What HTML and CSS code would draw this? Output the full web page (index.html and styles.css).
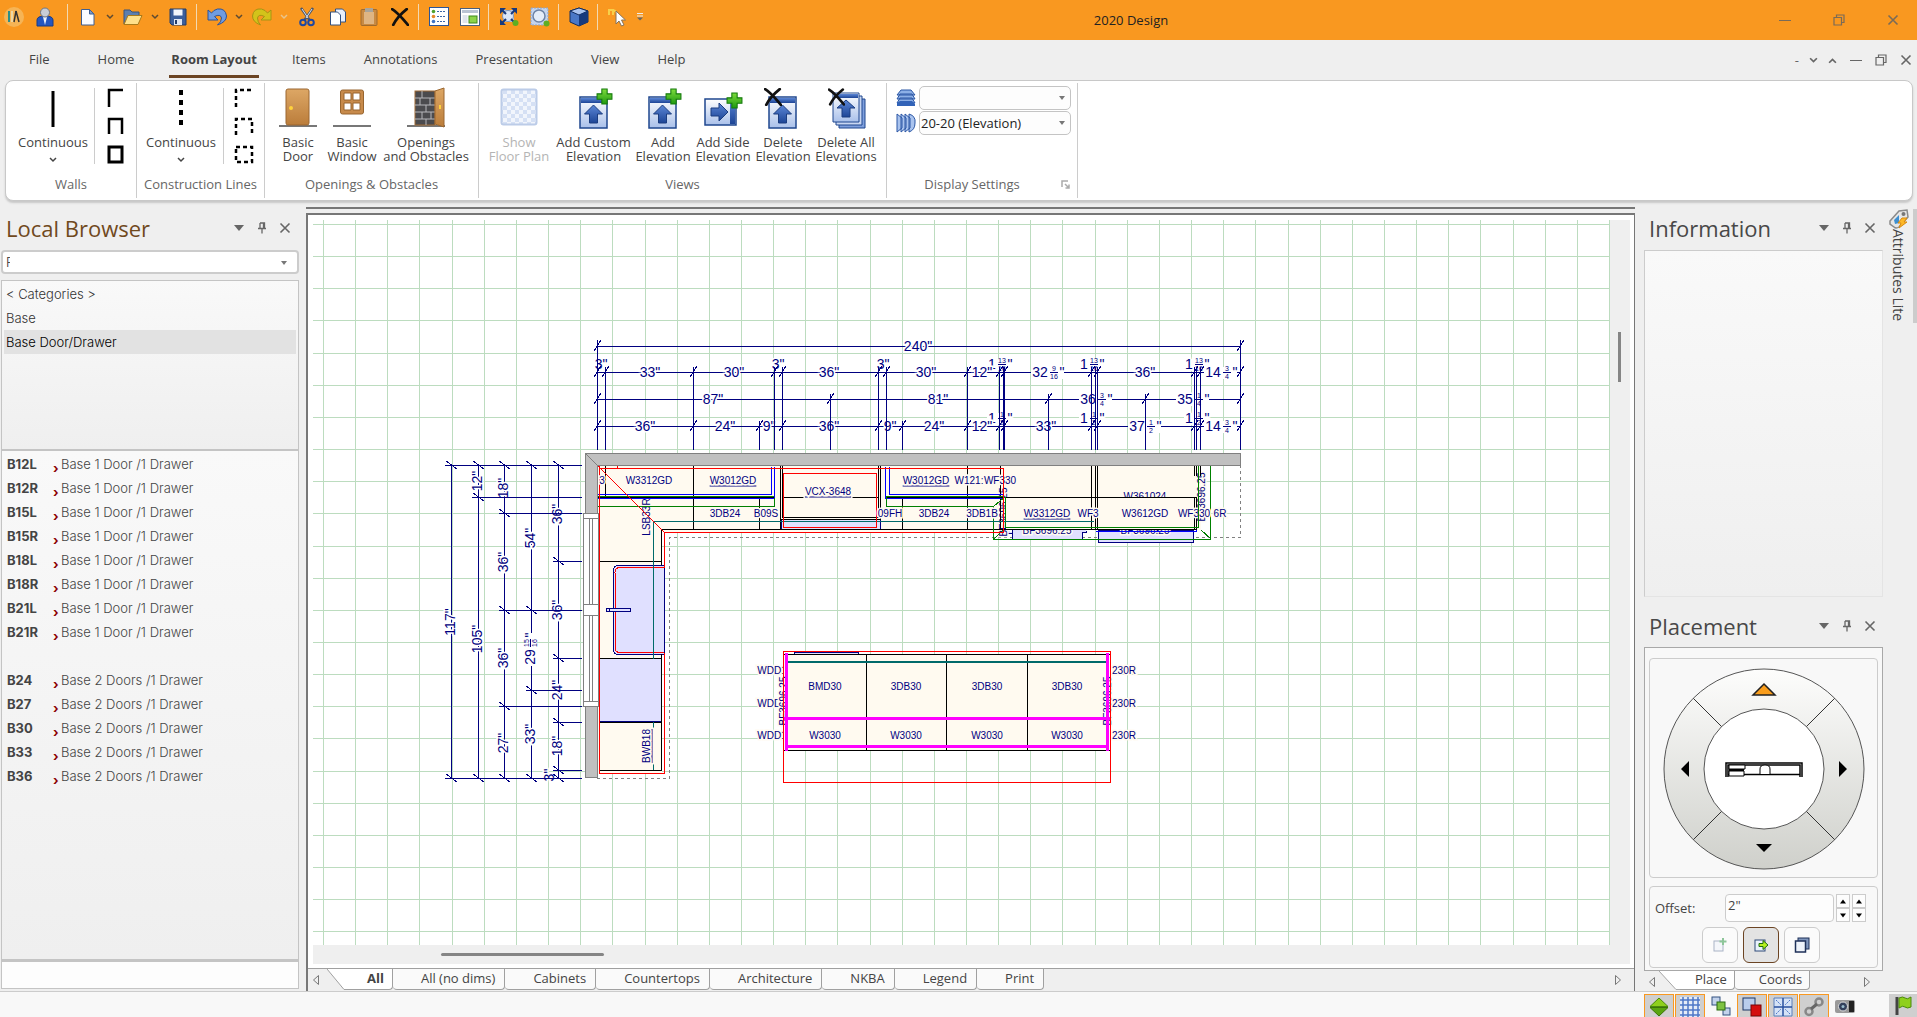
FILE: index.html
```html
<!DOCTYPE html>
<html lang="en">
<head>
  <meta charset="UTF-8" />
  <meta name="viewport" content="width=device-width, initial-scale=1.0"/>
  <title>2020 Design</title>
  <link rel="stylesheet" href="styles.css">
</head>
<body>

  <!-- shared icons -->
  <svg class="defs" width="0" height="0" aria-hidden="true">
    <defs>
      <linearGradient id="gBlue" x1="0" y1="0" x2="0" y2="1"><stop offset="0" stop-color="#5b86d6"/><stop offset="1" stop-color="#1d4596"/></linearGradient>
      <linearGradient id="gPale" x1="0" y1="0" x2="0" y2="1"><stop offset="0" stop-color="#ffffff"/><stop offset="1" stop-color="#a9c0ea"/></linearGradient>
      <linearGradient id="gWood" x1="0" y1="0" x2="0" y2="1"><stop offset="0" stop-color="#dda765"/><stop offset="1" stop-color="#bb7d3b"/></linearGradient>
      <linearGradient id="gGreen" x1="0" y1="0" x2="0" y2="1"><stop offset="0" stop-color="#7ddb3c"/><stop offset="1" stop-color="#1f9a10"/></linearGradient>
      <linearGradient id="gRing" x1="0" y1="0" x2="0" y2="1"><stop offset="0" stop-color="#fdfdfc"/><stop offset="1" stop-color="#cfd0cb"/></linearGradient>
      <pattern id="checks" width="8" height="8" patternUnits="userSpaceOnUse"><rect width="8" height="8" fill="#f1f5fc"/><path d="M0 0h4v4h-4zM4 4h4v4h-4z" fill="#d5e0f4"/></pattern>

      <symbol id="chev" viewBox="0 0 8 6"><path d="M1 1l3 3 3-3" fill="none" stroke="currentColor" stroke-width="1.500"/></symbol>
      <symbol id="pin" viewBox="0 0 10 12"><path d="M3 1h4.500v5.500M3 1v5.500M1 6.500h8M5 6.500v5M6.500 1v5.500" fill="none" stroke="currentColor" stroke-width="1.300"/></symbol>
      <symbol id="close" viewBox="0 0 12 12"><path d="M1.500 1.500l9 9M10.500 1.500l-9 9" fill="none" stroke="currentColor" stroke-width="1.600"/></symbol>
      <symbol id="tri" viewBox="0 0 12 8"><path d="M1 1h10l-5 6z" fill="currentColor"/></symbol>
      <symbol id="restore" viewBox="0 0 12 12"><path d="M1 3.500h7.500v7.500h-7.500zM3.500 3v-2h7.500v7.500h-2" fill="none" stroke="currentColor" stroke-width="1.200"/></symbol>
      <symbol id="min" viewBox="0 0 12 12"><path d="M0 6.500h12" stroke="currentColor"/></symbol>
      <symbol id="left" viewBox="0 0 8 12"><path d="M6.500 1.500v9l-5-4.500z" fill="none" stroke="#777"/></symbol>
      <symbol id="right" viewBox="0 0 8 12"><path d="M1.500 1.500v9l5-4.500z" fill="none" stroke="#777"/></symbol>
      <symbol id="slant" viewBox="0 0 21 21"><path d="M0 0l17 20.500h4V0z" fill="#fff"/><path d="M0 0l17 20.500h4" fill="none" stroke="#a0a0a0"/></symbol>
      <symbol id="plus" viewBox="0 0 16 16"><path d="M5.500 1h5v4.500h4.500v5h-4.500v4.500h-5v-4.500h-4.500v-5h4.500z" fill="url(#gGreen)" stroke="#157a0c"/></symbol>
      <symbol id="elev" viewBox="0 0 40 44"><rect x="6" y="11" width="27" height="31" fill="url(#gPale)" stroke="#1f478f" stroke-width="1.500"/><rect x="7" y="12" width="25" height="5" fill="url(#gBlue)"/><path d="M19.500 19l9 9h-5v9h-8v-9h-5z" fill="url(#gBlue)" stroke="#1b3d80"/></symbol>
      <symbol id="bigx" viewBox="0 0 16 16"><path d="M1 1c5 3 9 8 14 14M14 1c-5 4-9 8-12 14" fill="none" stroke="#111" stroke-width="2.400" stroke-linecap="round"/></symbol>
    </defs>
  </svg>

  <header class="titlebar">
    <div class="quick">
      <button class="q" aria-label="2020"><svg width="22" height="22" viewBox="0 0 22 22"><circle cx="11" cy="11" r="10" fill="#f6b455"/><path d="M6 5v11" stroke="#2c8f8a" stroke-width="2"/><path d="M9 5v11" stroke="#e9e3c0" stroke-width="1.500"/><path d="M13 5l-2 11M13 5l3 11" stroke="#333" stroke-width="1.500" fill="none"/></svg></button>
      <button class="q wide" aria-label="Client"><svg width="18" height="20" viewBox="0 0 18 20"><path d="M1 19v-6q0-4 8-4t8 4v6z" fill="#2456c0" stroke="#163a86"/><path d="M7 10l2 8 2-8z" fill="#eef3fc"/><circle cx="9" cy="5.500" r="4.500" fill="#c9cdd6" stroke="#6d7685"/></svg></button>
      <i></i>
      <button class="q" aria-label="New"><svg width="16" height="18" viewBox="0 0 16 18"><path d="M1.500 1.500h8l4.500 4.500v11h-12.500z" fill="#fbfcff" stroke="#3f5f92"/><path d="M9.500 1.500v4.500h4.500z" fill="#7d9ac8" stroke="#3f5f92"/></svg></button>
      <button class="dd" aria-label="New menu"><svg width="8" height="6"><use href="#chev"/></svg></button>
      <button class="q" aria-label="Open"><svg width="20" height="18" viewBox="0 0 20 18"><path d="M1 16v-14h6l2 2h7v4" fill="#5d7fae" stroke="#39557e"/><path d="M1 16.500l4-9h14l-4 9z" fill="#ffe08a" stroke="#a87a1b"/></svg></button>
      <button class="dd" aria-label="Open menu"><svg width="8" height="6"><use href="#chev"/></svg></button>
      <button class="q" aria-label="Save"><svg width="18" height="18" viewBox="0 0 18 18"><path d="M1 1h16v16h-14l-2-2z" fill="#3c5f9b" stroke="#233c69"/><rect x="4.500" y="1.500" width="9" height="6" fill="#f3f6fb"/><rect x="5" y="11" width="8" height="6" fill="#dfe6f2"/><rect x="6" y="12" width="2" height="4" fill="#233c69"/></svg></button>
      <i></i>
      <button class="q" aria-label="Undo"><svg width="20" height="18" viewBox="0 0 20 18"><path d="M1 2v10h10l-3.500-3.500q6-3 7 1.500 0 4-4 7 9-3 9-9-1-8-9-7-4 1-6 4z" fill="#6f9ce0" stroke="#2b529a"/></svg></button>
      <button class="dd" aria-label="Undo menu"><svg width="8" height="6"><use href="#chev"/></svg></button>
      <button class="q" aria-label="Redo"><svg width="20" height="18" viewBox="0 0 20 18"><path d="M19 2v10h-10l3.500-3.500q-6-3-7 1.500 0 4 3 7-8-3-8-9 1-8 9-7 4 1 6 4z" fill="#d3c31a" stroke="#a59414"/></svg></button>
      <button class="dd pale" aria-label="Redo menu"><svg width="8" height="6"><use href="#chev"/></svg></button>
      <button class="q" aria-label="Cut"><svg width="18" height="20" viewBox="0 0 18 20"><path d="M3 1l8.500 12M15 1l-8.500 12" stroke="#4c5669" stroke-width="2.500"/><path d="M4 2l6 9M14 2l-6 9" stroke="#dce3ee"/><circle cx="5" cy="15.500" r="2.800" fill="none" stroke="#1f47a0" stroke-width="2"/><circle cx="13" cy="15.500" r="2.800" fill="none" stroke="#1f47a0" stroke-width="2"/></svg></button>
      <button class="q" aria-label="Copy"><svg width="18" height="18" viewBox="0 0 18 18"><path d="M6.500 1h7l3 3v10h-10z" fill="#e8eefa" stroke="#33507f"/><path d="M1.500 4h7l3 3v10h-10z" fill="#fff" stroke="#33507f"/></svg></button>
      <button class="q" aria-label="Paste"><svg width="18" height="20" viewBox="0 0 18 20"><rect x="1" y="2.500" width="16" height="16" rx="1" fill="#c98a42" stroke="#a06a2c"/><rect x="4" y="5" width="10" height="12" fill="#dfb583"/><rect x="5" y="1" width="8" height="4" fill="#a9a49a"/></svg></button>
      <button class="q" aria-label="Delete"><svg width="18" height="18"><use href="#bigx"/></svg></button>
      <i></i>
      <button class="q" aria-label="Item list"><svg width="20" height="20" viewBox="0 0 20 20"><rect x=".5" y=".5" width="19" height="18" fill="#fff" stroke="#2c5597"/><circle cx="4.500" cy="4.500" r="1.800" fill="#51a22d"/><circle cx="4.500" cy="9.500" r="1.800" fill="#e6892a"/><circle cx="4.500" cy="14.500" r="1.800" fill="#3f74c4"/><path d="M8 4.500h9M8 9.500h9M8 14.500h9" stroke="#3b66a8" stroke-dasharray="2 1"/></svg></button>
      <button class="q" aria-label="Report"><svg width="20" height="18" viewBox="0 0 20 18"><rect x=".5" y=".5" width="19" height="17" fill="#fff" stroke="#4b5f7e"/><rect x="2" y="2" width="16" height="3" fill="#b9c3d3"/><rect x="2.500" y="7" width="5" height="8" fill="#dfe4ec"/><rect x="9" y="8" width="8" height="7" fill="#8dd34a" stroke="#3d8a1b"/></svg></button>
      <i></i>
      <button class="q" aria-label="Zoom extents"><svg width="20" height="20" viewBox="0 0 20 20"><rect x="4" y="3" width="11" height="12" fill="#b9cbe8"/><circle cx="9" cy="9" r="5.500" fill="#dbe6f7" stroke="#8494ad"/><path d="M1 1h6l-6 6zM18 1v6l-6-6zM1 18v-6l6 6z" fill="#183a7d"/><path d="M3 3l4 4M16 3l-4 4M3 16l4-4M12 12l3 3" stroke="#183a7d" stroke-width="2"/><circle cx="16.500" cy="16" r="3" fill="#5fae22"/></svg></button>
      <button class="q" aria-label="Zoom window"><svg width="20" height="20" viewBox="0 0 20 20"><rect x="1" y="1" width="17" height="17" fill="#c4d4ee" stroke="#8ca3c9" stroke-dasharray="2 1"/><circle cx="9" cy="9" r="6" fill="#e4ecf8" stroke="#6e83a5" stroke-width="1.500"/><circle cx="16.500" cy="16.500" r="3" fill="#5fae22"/></svg></button>
      <i></i>
      <button class="q" aria-label="3D view"><svg width="20" height="20" viewBox="0 0 20 20"><path d="M10 1l9 3v11l-9 4-9-4v-11z" fill="#4a78c6" stroke="#122d5f"/><path d="M10 1l9 3-9 4-9-4z" fill="#a9c3ee" stroke="#122d5f"/><path d="M10 8l9-4v11l-9 4z" fill="#173a7c"/></svg></button>
      <i></i>
      <button class="q" aria-label="Select"><svg width="20" height="20" viewBox="0 0 20 20"><path d="M1 8v-5h4v5M6 3l4 4" stroke="#f7d04a" stroke-width="2" fill="none"/><path d="M8 4v13l3-3 2.500 5 2.500-1-2.500-5h4z" fill="#fff" stroke="#86735a"/></svg></button>
      <button class="dd" aria-label="Customize"><svg width="8" height="10" viewBox="0 0 8 10"><path d="M1 1.500h6M1 4h6" stroke="#eee"/><path d="M1 5.500h6l-3 3z" fill="#666"/></svg></button>
    </div>
    <div class="app-title">2020 Design</div>
    <div class="win">
      <button aria-label="Minimize"><svg width="12" height="12"><use href="#min"/></svg></button>
      <button aria-label="Restore"><svg width="12" height="12"><use href="#restore"/></svg></button>
      <button aria-label="Close"><svg width="12" height="12"><use href="#close"/></svg></button>
    </div>
  </header>

  <nav class="menu">
    <a href="#">File</a>
    <a href="#">Home</a>
    <a href="#" class="on">Room Layout</a>
    <a href="#">Items</a>
    <a href="#">Annotations</a>
    <a href="#">Presentation</a>
    <a href="#">View</a>
    <a href="#">Help</a>
    <div class="mdi">
      <span>-</span>
      <button aria-label="Style"><svg width="9" height="7"><use href="#chev"/></svg></button>
      <button aria-label="Collapse ribbon"><svg class="up" width="9" height="7"><use href="#chev"/></svg></button>
      <button aria-label="Minimize view"><svg width="12" height="12"><use href="#min"/></svg></button>
      <button aria-label="Restore view"><svg width="12" height="12"><use href="#restore"/></svg></button>
      <button aria-label="Close view"><svg width="12" height="12"><use href="#close"/></svg></button>
    </div>
  </nav>

  <section class="ribbon">
    <div class="group walls">
      <div class="tools">
        <button class="cont"><svg width="40" height="44" viewBox="0 0 40 44"><path d="M20 5v36" stroke="#000" stroke-width="3"/></svg><span>Continuous</span><svg width="8" height="6"><use href="#chev"/></svg></button>
        <div class="shapes">
          <button aria-label="L walls"><svg width="20" height="20" viewBox="0 0 20 20"><path d="M4 19V2h14" fill="none" stroke="#000" stroke-width="2.500"/></svg></button>
          <button aria-label="U walls"><svg width="20" height="20" viewBox="0 0 20 20"><path d="M4 18V3h13v15" fill="none" stroke="#000" stroke-width="2.500"/></svg></button>
          <button aria-label="Closed walls"><svg width="20" height="20" viewBox="0 0 20 20"><path d="M4 3h13v15h-13z" fill="none" stroke="#000" stroke-width="3"/></svg></button>
        </div>
      </div>
      <h2>Walls</h2>
    </div>
    <div class="group lines">
      <div class="tools">
        <button class="cont"><svg width="40" height="44" viewBox="0 0 40 44"><path d="M20 4v37" stroke="#000" stroke-width="4" stroke-dasharray="5 5"/></svg><span>Continuous</span><svg width="8" height="6"><use href="#chev"/></svg></button>
        <div class="shapes">
          <button aria-label="L lines"><svg width="20" height="20" viewBox="0 0 20 20"><path d="M2 19V2h17" fill="none" stroke="#000" stroke-width="2.500" stroke-dasharray="4 3"/></svg></button>
          <button aria-label="U lines"><svg width="20" height="20" viewBox="0 0 20 20"><path d="M2 19V3h16v16" fill="none" stroke="#000" stroke-width="2.500" stroke-dasharray="4 3"/></svg></button>
          <button aria-label="Closed lines"><svg width="20" height="20" viewBox="0 0 20 20"><path d="M2 3h16v15h-16z" fill="none" stroke="#000" stroke-width="2.500" stroke-dasharray="4 3"/></svg></button>
        </div>
      </div>
      <h2>Construction Lines</h2>
    </div>
    <div class="group openings">
      <div class="tools">
        <button class="big"><svg width="40" height="44" viewBox="0 0 40 44"><path d="M1 40h38" stroke="#777" stroke-width="2"/><rect x="8" y="3" width="23" height="36" rx="2" fill="url(#gWood)" stroke="#9b6730"/><circle cx="13" cy="22" r="2" fill="#ffd23d"/></svg>Basic<br>Door</button>
        <button class="big"><svg width="40" height="44" viewBox="0 0 40 44"><path d="M1 40h38" stroke="#777" stroke-width="2"/><rect x="8.500" y="4" width="23" height="24" rx="2" fill="#c78a4b" stroke="#98652f"/><path d="M12 7h7v7h-7zM21 7h7v7h-7zM12 17h7v7h-7zM21 17h7v7h-7z" fill="#fff" stroke="#98652f"/></svg>Basic<br>Window</button>
        <button class="big"><svg width="40" height="44" viewBox="0 0 40 44"><path d="M1 40h38" stroke="#777" stroke-width="2"/><rect x="9" y="5" width="20" height="34" fill="#4b4b4e" stroke="#a06a34"/><path d="M9 12h20M9 19h20M9 26h20M9 33h20M16 5v7M24 12v7M14 19v-7M20 19v7M16 26v7M25 26v7M20 33v6" stroke="#b7b7ba"/><path d="M29 5l9-3v39l-9-3z" fill="url(#gWood)" stroke="#9b6730"/><path d="M34 19v4" stroke="#ffd23d" stroke-width="2"/></svg>Openings<br>and Obstacles</button>
      </div>
      <h2>Openings &amp; Obstacles</h2>
    </div>
    <div class="group views">
      <div class="tools">
        <button class="big w70" disabled><svg width="40" height="44" viewBox="0 0 40 44"><rect x="2.500" y="3.500" width="35" height="35" rx="2" fill="url(#checks)" stroke="#bccce8" stroke-width="2"/></svg>Show<br>Floor Plan</button>
        <button class="big w80"><svg width="40" height="44" viewBox="0 0 40 44"><use href="#elev" width="40" height="44"/><use href="#plus" x="22" y="2" width="17" height="17"/></svg>Add Custom<br>Elevation</button>
        <button class="big w60"><svg width="40" height="44" viewBox="0 0 40 44"><use href="#elev" width="40" height="44"/><use href="#plus" x="22" y="2" width="17" height="17"/></svg>Add<br>Elevation</button>
        <button class="big w60"><svg width="40" height="44" viewBox="0 0 40 44"><rect x="2" y="13" width="31" height="26" fill="url(#gPale)" stroke="#1f478f" stroke-width="1.500"/><rect x="27" y="14" width="5" height="24" fill="url(#gBlue)"/><path d="M25 26l-9-9v5h-8v8h8v5z" fill="url(#gBlue)" stroke="#1b3d80"/><use href="#plus" x="23" y="6" width="17" height="17"/></svg>Add Side<br>Elevation</button>
        <button class="big w60"><svg width="40" height="44" viewBox="0 0 40 44"><use href="#elev" width="40" height="44"/><use href="#bigx" x="1" y="2" width="18" height="18"/></svg>Delete<br>Elevation</button>
        <button class="big w66"><svg width="40" height="44" viewBox="0 0 40 44"><path d="M13 13h26v29h-26z" fill="#7f9fdc" stroke="#1f478f"/><path d="M10 10h26v29h-26z" fill="#c9d7f2" stroke="#1f478f"/><path d="M7 7h26v29h-26z" fill="url(#gPale)" stroke="#1f478f"/><rect x="8" y="8" width="24" height="4" fill="url(#gBlue)"/><path d="M20 14l9 8h-5v9h-8v-9h-5z" fill="url(#gBlue)" stroke="#1b3d80"/><use href="#bigx" x="2" y="2" width="17" height="18"/></svg>Delete All<br>Elevations</button>
      </div>
      <h2>Views</h2>
    </div>
    <div class="group display">
      <div class="combos">
        <div class="row"><svg width="20" height="20" viewBox="0 0 20 20"><path d="M5 2h10l4 5h-18zM4 6h12l3 5h-18zM4 10h12l3 5h-18z" fill="#8db0e6" stroke="#2b57a5"/><path d="M1 15l3-2h12l3 3v2h-18z" fill="#3263b8"/></svg><label class="pick"><select aria-label="Floor plan display"><option></option></select></label></div>
        <div class="row"><svg width="20" height="20" viewBox="0 0 20 20"><path d="M1 1l5 4v10l-5 4zM5 1l5 4v10l-5 4zM9 1l5 4v10l-5 4zM13 1q7 2 6 9 0 7-6 9z" fill="#a9c3ee" stroke="#2b57a5"/></svg><label class="pick"><select aria-label="Elevation display"><option>20-20 (Elevation)</option></select></label></div>
      </div>
      <h2>Display Settings</h2>
      <button class="launch" aria-label="More display settings"><svg width="9" height="9" viewBox="0 0 9 9"><path d="M1 7V1h6M4 4l4 4M8 4.500v3.500h-3.500" fill="none" stroke="#aaa" stroke-width="1.500"/></svg></button>
    </div>
  </section>

  <main>
    <aside class="browser">
      <div class="head brown"><h1>Local Browser</h1>
        <button aria-label="Panel menu"><svg width="12" height="8"><use href="#tri"/></svg></button>
        <button aria-label="Pin"><svg width="10" height="12"><use href="#pin"/></svg></button>
        <button aria-label="Close panel"><svg width="12" height="12"><use href="#close"/></svg></button>
      </div>
      <div class="search"><input type="text" value="F" aria-label="Catalog"></div>
      <div class="cats">
        <a href="#">&lt; Categories &gt;</a>
        <a href="#">Base</a>
        <a href="#" class="sel">Base Door/Drawer</a>
      </div>
      <div class="items">
        <table>
          <tr><th>B12L</th><td>Base 1 Door /1 Drawer</td></tr>
          <tr><th>B12R</th><td>Base 1 Door /1 Drawer</td></tr>
          <tr><th>B15L</th><td>Base 1 Door /1 Drawer</td></tr>
          <tr><th>B15R</th><td>Base 1 Door /1 Drawer</td></tr>
          <tr><th>B18L</th><td>Base 1 Door /1 Drawer</td></tr>
          <tr><th>B18R</th><td>Base 1 Door /1 Drawer</td></tr>
          <tr><th>B21L</th><td>Base 1 Door /1 Drawer</td></tr>
          <tr><th>B21R</th><td>Base 1 Door /1 Drawer</td></tr>
          <tr class="gap"><th></th><td></td></tr>
          <tr><th>B24</th><td>Base 2 Doors /1 Drawer</td></tr>
          <tr><th>B27</th><td>Base 2 Doors /1 Drawer</td></tr>
          <tr><th>B30</th><td>Base 2 Doors /1 Drawer</td></tr>
          <tr><th>B33</th><td>Base 2 Doors /1 Drawer</td></tr>
          <tr><th>B36</th><td>Base 2 Doors /1 Drawer</td></tr>
        </table>
      </div>
      <input class="filter" type="text" aria-label="Find item">
    </aside>

    <section class="plan">
      <div class="frame">
        <div class="paper">
          <svg class="drawing" width="100%" height="100%">
            <g transform="translate(-313 -220)">
              <g id="grid"></g>
              <g id="dims"></g>

              <!-- base run, left leg and top leg -->
              <path class="cab" d="M597 466h407v66h-342v242h-65z"/>
              <path class="cab" d="M1003 466h93v64h-93zM1096 466h105v64h-105z"/>
              <path class="dash" d="M597 778.500h72.500v-241h571v-72"/>

              <!-- fridge and oven fronts below the tall cabinets -->
              <path class="appl" d="M1012.500 530v9h70v-6.500h4v-2M1007 530v3h5.500"/>
              <path class="appl" d="M1098.500 530.500h95v12h-95z"/>
              <text class="lbl" x="1047" y="530">BF3696.25</text>
              <text class="lbl" x="1145" y="530">BF3696.25</text>
              <text class="lbl" x="1145" y="496">W361024</text>
              <text class="lbl" transform="translate(1003 512) rotate(-90)">BF3696.25</text>
              <text class="lbl" transform="translate(1201 497) rotate(-90)">BF3696.25</text>
              <text class="lbl" transform="translate(646 517) rotate(-90)">LSB33R</text>
              <path class="cab" d="M1098 498h98v31h-98zM1006 498h84v31h-84z"/>
              <path class="k" d="M1005 497.500h191.500v32M1003 529.500h194M1091.500 466v64M1095.500 466v64M1097.500 466v64M1194.500 466v10M1196.500 466v10M1200.500 466v10M1194.500 497v32"/>

              <!-- sink, dishwasher and hood -->
              <rect class="appl" x="599.500" y="658.500" width="62" height="63"/>
              <path class="appl" d="M664.500 565.500h-46q-5 0-5 5v79q0 5 5 5h46z"/>
              <path class="r" d="M664 567.500h-44q-5 0-5 5v75q0 5 5 5h44"/>
              <path class="appl" d="M608 608.500h22.500v3h-22.500z"/><circle class="appl" cx="608" cy="610" r="2"/>
              <rect class="appl" x="781" y="519.500" width="99" height="10"/>

              <path class="k" d="M605.500 466v31M693.500 466v63M759.500 498v31M902.500 498v31M967.500 466v63M1000.500 466v63M662 529.500h341M661.500 529v36M661.500 654v116h-62M599 561.500h62M599 658.500h62M599 722.500h62"/>
              <path class="k" d="M780.500 466v63M782.500 466v51.500h96v-51.500M880.500 466v53h-100M783 497.500h95"/>
              <path class="b" d="M597 494.500h174.500v-28M597 498.500h177.500v-32M1004 494.500h-115v-28M1004 498.500h-118.500v-32M1096 531.500h100v-2"/>
              <path class="k" d="M597 497.500h177M886 497.500h118"/>
              <path class="g" d="M597 496.500h177M597 506.500h177.500v-9M1004 496.500h-118M886.500 497v9.500h107v33h217v-73.500M1005.500 497v30.500h193v-61M994 506l11-9M994 539l10-10M1201 530l10 9"/>
              <path class="t" d="M653.500 659V521.500h440M653.500 722v48"/>
              <path class="r" d="M599.500 466v307.500h65v-121M664.500 567.500v-35h339v-64h-404M598 466l66.500 66.500M617.500 466v3"/>
              <rect class="r" x="783.500" y="473.500" width="93" height="54"/>

              <text class="lbl" x="602" y="480">3</text>
              <text class="lbl" x="649" y="480">W3312GD</text>
              <text class="lbl u" x="733" y="480">W3012GD</text>
              <text class="lbl u" x="828" y="491">VCX-3648</text>
              <text class="lbl u" x="926" y="480">W3012GD</text>
              <text class="lbl" x="969" y="480">W121:</text>
              <text class="lbl" x="1000" y="480">WF330</text>
              <text class="lbl" x="725" y="513">3DB24</text>
              <text class="lbl" x="766" y="513">B09S</text>
              <text class="lbl" x="890" y="513">09FH</text>
              <text class="lbl" x="934" y="513">3DB24</text>
              <text class="lbl" x="982" y="513">3DB1B</text>
              <text class="lbl u" x="1047" y="513">W3312GD</text>
              <text class="lbl" x="1088" y="513">WF3</text>
              <text class="lbl" x="1145" y="513">W3612GD</text>
              <text class="lbl" x="1194" y="513">WF330</text>
              <text class="lbl" x="1220" y="513">6R</text>
              <text class="lbl u" transform="translate(646 746) rotate(-90)">BWB18</text>
              <path class="g" d="M1198.500 466v61"/>
              <path class="r" d="M1003.500 468v64"/>

              <!-- walls and window -->
              <path class="wall" d="M585.500 453.500h655v12h-643v312h-12z"/>
              <path class="edge" d="M585.500 453.500l12 12"/>
              <path class="win-frame" d="M583.500 513.500h15v193h-15zM583.500 518.500h15M583.500 604.500h15M583.500 615.500h15M583.500 701.500h15M589.500 518v86M592.500 518v86M589.500 615v86M592.500 615v86"/>

              <!-- island -->
              <text class="lbl" x="772" y="670">WDD1</text>
              <text class="lbl" x="772" y="703">WDD1</text>
              <text class="lbl" x="772" y="735">WDD1</text>
              <text class="lbl" x="1124" y="670">230R</text>
              <text class="lbl" x="1124" y="703">230R</text>
              <text class="lbl" x="1124" y="735">230R</text>
              <path class="cab" d="M784 654h326v97h-326z"/>
              <text class="lbl" transform="translate(783 701) rotate(-90)">BF3696.25</text>
              <text class="lbl" transform="translate(1107 701) rotate(-90)">BF3696.25</text>
              <path class="appl" d="M794.500 652.500h64v2h-64z"/>
              <path class="k" d="M784 654.500h326M784 750.500h326M866.500 654v96M946.500 654v96M1027.500 654v96"/>
              <path class="t thick" d="M788 662h318"/>
              <path class="m" d="M786.500 653v98M1107.500 653v98M783 718.500h328M785 746.500h324"/>
              <rect class="r" x="783.500" y="651.500" width="327" height="131"/>
              <text class="lbl" x="825" y="686">BMD30</text>
              <text class="lbl" x="906" y="686">3DB30</text>
              <text class="lbl" x="987" y="686">3DB30</text>
              <text class="lbl" x="1067" y="686">3DB30</text>
              <text class="lbl" x="825" y="735">W3030</text>
              <text class="lbl" x="906" y="735">W3030</text>
              <text class="lbl" x="987" y="735">W3030</text>
              <text class="lbl" x="1067" y="735">W3030</text>
            </g>
          </svg>
          <div class="vbar"><b></b></div>
          <div class="hbar"><b></b></div>
        </div>
        <div class="tabs">
          <svg class="arrow" width="8" height="12"><use href="#left"/></svg>
          <svg class="slant" width="21" height="21"><use href="#slant"/></svg>
          <button class="tab on">All</button>
          <button class="tab">All (no dims)</button>
          <button class="tab">Cabinets</button>
          <button class="tab">Countertops</button>
          <button class="tab">Architecture</button>
          <button class="tab">NKBA</button>
          <button class="tab">Legend</button>
          <button class="tab">Print</button>
          <svg class="arrow end" width="8" height="12"><use href="#right"/></svg>
        </div>
      </div>
    </section>

    <aside class="side">
      <div class="head"><h1>Information</h1>
        <button aria-label="Panel menu"><svg width="12" height="8"><use href="#tri"/></svg></button>
        <button aria-label="Pin"><svg width="10" height="12"><use href="#pin"/></svg></button>
        <button aria-label="Close panel"><svg width="12" height="12"><use href="#close"/></svg></button>
      </div>
      <div class="info"></div>
      <div class="head"><h1>Placement</h1>
        <button aria-label="Panel menu"><svg width="12" height="8"><use href="#tri"/></svg></button>
        <button aria-label="Pin"><svg width="10" height="12"><use href="#pin"/></svg></button>
        <button aria-label="Close panel"><svg width="12" height="12"><use href="#close"/></svg></button>
      </div>
      <div class="place">
        <div class="card wheel">
          <svg width="204" height="204" viewBox="0 0 204 204">
            <circle cx="102" cy="102" r="100" fill="url(#gRing)" stroke="#555"/>
            <circle cx="102" cy="102" r="60" fill="#fff" stroke="#555"/>
            <path d="M31.300 31.300l28.300 28.300M172.700 31.300l-28.300 28.300M31.300 172.700l28.300-28.300M172.700 172.700l-28.300-28.300" stroke="#333"/>
            <path d="M102 17l11 11h-22z" fill="#f99d1c" stroke="#222" stroke-width="1.500"/>
            <path d="M27 94v16l-8-8zM177 94v16l8-8zM94 177h16l-8 8z" fill="#000"/>
            <path d="M64 110V96h76v14M66 110V98h72v12M66 107.500h72" fill="none" stroke="#000" stroke-width="1.500"/>
            <path d="M98 107v-5q0-4 5-4t5 4v5M67 98h16v4h-16zM67 104h15v5h-15z" fill="#fff" stroke="#000"/>
            <path d="M67 103h15" stroke="#000" stroke-width="2"/>
          </svg>
        </div>
        <div class="card opts">
          <div class="offset">
            <label for="off">Offset:</label>
            <input id="off" type="text" value='2"'>
            <div class="spin">
              <button aria-label="Offset up"><svg width="8" height="5" viewBox="0 0 8 5"><path d="M1 4.500h6l-3-4z"/></svg></button>
              <button aria-label="Offset down"><svg width="8" height="5" viewBox="0 0 8 5"><path d="M1 .5h6l-3 4z"/></svg></button>
            </div>
            <div class="spin">
              <button aria-label="Step up"><svg width="8" height="5" viewBox="0 0 8 5"><path d="M1 4.500h6l-3-4z"/></svg></button>
              <button aria-label="Step down"><svg width="8" height="5" viewBox="0 0 8 5"><path d="M1 .5h6l-3 4z"/></svg></button>
            </div>
          </div>
          <div class="modes">
            <button aria-label="Add"><svg width="16" height="16" viewBox="0 0 16 16"><rect x="2" y="4" width="9" height="10" fill="#f4f6fa" stroke="#aab4c6"/><path d="M11 1v7M7.500 4.500h7" stroke="#8ec69a" stroke-width="2"/></svg></button>
            <button class="on" aria-label="Add next to"><svg width="16" height="16" viewBox="0 0 16 16"><rect x="2" y="3" width="10" height="11" fill="#eaf2fb" stroke="#2f4a78"/><path d="M6 6.500h4v-3l5 4.500-5 4.500v-3h-4z" fill="#b5f01e" stroke="#1f6f10"/></svg></button>
            <button aria-label="Duplicate"><svg width="16" height="16" viewBox="0 0 16 16"><rect x="4" y="1" width="11" height="11" fill="#7f96bd" stroke="#1f3159"/><rect x="1.500" y="4" width="10" height="11" fill="#eef3fa" stroke="#1f3159" stroke-width="1.500"/></svg></button>
          </div>
        </div>
      </div>
      <div class="tabs">
        <svg class="arrow" width="8" height="12"><use href="#left"/></svg>
        <svg class="slant" width="21" height="19" viewBox="0 0 21 21" preserveAspectRatio="none"><use href="#slant" width="21" height="21"/></svg>
        <button class="tab plain">Place</button>
        <button class="tab">Coords</button>
        <svg class="arrow end" width="8" height="12"><use href="#right"/></svg>
      </div>
    </aside>

    <div class="rail">
      <svg width="20" height="20" viewBox="0 0 20 20"><path d="M1 12l9-10 8-1 1 7-9 10q-3 2-5 0l-4-3z" fill="#e6e6e6" stroke="#8a8a8a" stroke-width="1.500"/><circle cx="14.500" cy="5" r="2" fill="#777"/><path d="M5 11l5-5v8l-4 1z" fill="#3d8fd1"/><path d="M13 9l-4 5h3l-2 5 8-6h-3l3-4z" fill="#fdb827" stroke="#d98b12"/></svg>
      <span>Attributes Lite</span>
    </div>
  </main>

  <footer>
    <button class="on" aria-label="Floor view"><svg width="20" height="20" viewBox="0 0 20 20"><path d="M10 1l9 8.500h-18z" fill="#8fd01c" stroke="#4b8a0c"/><path d="M1 10.500h18l-9 8.500z" fill="#5aa510" stroke="#3c7508"/></svg></button>
    <button class="on" aria-label="Grid"><svg width="20" height="20" viewBox="0 0 20 20"><path d="M0 0h20v20h-20z" fill="#e4ebf7"/><path d="M3 0v20M8 0v20M13 0v20M18 0v20M0 3h20M0 8h20M0 13h20M0 18h20" stroke="#4d78c8" stroke-width="1.500"/></svg></button>
    <button aria-label="Snap"><svg width="20" height="20" viewBox="0 0 20 20"><rect x="1" y="1" width="8" height="8" fill="#c3d3ec" stroke="#33517f"/><rect x="12" y="12" width="7" height="7" fill="#c3d3ec" stroke="#33517f"/><rect x="6" y="6" width="8" height="8" fill="#7ec242" stroke="#2b6a10"/></svg></button>
    <button class="on" aria-label="Collision"><svg width="20" height="20" viewBox="0 0 20 20"><rect x="1" y="1" width="12" height="12" fill="#b9cdec" stroke="#1d3766"/><rect x="9" y="8" width="10" height="11" fill="#d40f0f" stroke="#7a0505"/></svg></button>
    <button class="on" aria-label="Align"><svg width="20" height="20" viewBox="0 0 20 20"><path d="M1 1h18v18h-18z" fill="#d5e2f6" stroke="#5b7fbb"/><path d="M10 1v18M1 10h18" stroke="#2850a0" stroke-width="1.500"/><path d="M3 3l5 5M17 3l-5 5M3 17l5-5M17 17l-5-5" stroke="#4d78c8" stroke-dasharray="2 1"/></svg></button>
    <button class="on" aria-label="Link"><svg width="20" height="20" viewBox="0 0 20 20"><circle cx="5" cy="14.500" r="3.500" fill="none" stroke="#888" stroke-width="2.500"/><circle cx="15" cy="5" r="3.500" fill="none" stroke="#888" stroke-width="2.500"/><path d="M7 12l6-5" stroke="#666" stroke-width="3"/></svg></button>
    <button aria-label="Camera"><svg width="20" height="20" viewBox="0 0 20 20"><rect x="0" y="4" width="20" height="13" rx="2" fill="#9a9a9a"/><rect x="14" y="5" width="5" height="11" fill="#222"/><circle cx="8" cy="10.500" r="4.500" fill="#34415c" stroke="#ddd"/><circle cx="8" cy="10.500" r="1.500" fill="#9bc"/></svg></button>
    <button class="flag" aria-label="Messages"><svg width="20" height="20" viewBox="0 0 20 20"><path d="M4 1v18" stroke="#444" stroke-width="3"/><path d="M6 2q4-2 6 0t6-1v10q-4 2-6 0t-6 1z" fill="#8fd01c" stroke="#4b8a0c"/></svg></button>
  </footer>

  <script>
    const NS = "http://www.w3.org/2000/svg";
    const grid = document.getElementById("grid");
    const dims = document.getElementById("dims");

    function add(parent, tag, attrs, text) {
      const el = document.createElementNS(NS, tag);
      for (const k in attrs) el.setAttribute(k, attrs[k]);
      if (text) el.textContent = text;
      parent.appendChild(el);
      return el;
    }

    // 12" grid
    const step = 32.15;
    for (let i = 0; i < 100; i++) {
      const x = Math.round(323 + i * step) + 0.5;
      const y = Math.round(224 + i * step) + 0.5;
      add(grid, "path", { d: `M${x} 0V3000M0 ${y}H3500` });
    }

    // label: [text, position along the line] or [whole, position, top, bottom] for a fraction
    function label(x, y, l, vertical) {
      const g = add(dims, "g", { transform: `translate(${x} ${y})` + (vertical ? " rotate(-90)" : "") });
      if (l.length < 4) {
        add(g, "text", { class: "dim" }, l[0]);
        return;
      }
      const w = l[0].length * 4;
      add(g, "rect", { x: -w - 7, y: -5, width: w * 2 + 17, height: 12, fill: "#fff" });
      add(g, "text", { class: "dim", x: -6 }, l[0]);
      add(g, "text", { class: "dim", x: w + 8 }, '"');
      add(g, "text", { class: "frac", x: w, y: -4 }, l[2]);
      add(g, "text", { class: "frac", x: w, y: 4 }, l[3]);
      add(g, "path", { d: `M${w - 4} .5h8` });
    }

    const rows = [
      { y: 346, ticks: [597, 1240], labels: [['240"', 918]] },
      { y: 372, ticks: [597, 605, 693, 774, 782, 878, 886, 967, 999, 1004, 1091, 1097, 1194, 1200, 1240],
        labels: [['33"', 650], ['30"', 734], ['36"', 829], ['30"', 926], ['12"', 982], ["32", 1046, "9", "16"], ['36"', 1145], ["14", 1219, "3", "4"]] },
      { y: 399, ticks: [597, 830, 1048, 1145, 1240],
        labels: [['87"', 713], ['81"', 938], ["36", 1094, "3", "4"], ["35", 1191, "1", "4"]] },
      { y: 426, ticks: [597, 693, 759, 782, 878, 902, 967, 999, 1004, 1091, 1097, 1194, 1200, 1240],
        labels: [['36"', 645], ['24"', 725], ['9"', 769], ['36"', 829], ['9"', 890], ['24"', 934], ['12"', 982], ['33"', 1046], ["37", 1143, "1", "2"], ["14", 1219, "3", "4"]] }
    ];
    const cols = [
      { x: 451, ticks: [465, 778], labels: [['117"', 622]] },
      { x: 478, ticks: [465, 497, 778], labels: [['12"', 481], ['105"', 639]] },
      { x: 504, ticks: [465, 513, 610, 706, 778], labels: [['18"', 488], ['36"', 562], ['36"', 658], ['27"', 743]] },
      { x: 531, ticks: [465, 610, 690, 778], labels: [['54"', 538], ["29", 651, "15", "16"], ['33"', 734]] },
      { x: 558, ticks: [465, 561, 658, 722, 770, 778], labels: [['36"', 514], ['36"', 610], ['24"', 690], ['18"', 746]] }
    ];

    // raised labels for the narrow fillers
    [601, 778, 883].forEach(x => label(x, 364, ['3"']));
    [998, 1090, 1195].forEach(x => label(x, 364, ["1", x, "13", "16"]));
    [998, 1090, 1195].forEach(x => label(x, 418, ["1", x, "1", "2"]));
    label(549, 775, ['3"'], true);

    rows.forEach(r => {
      add(dims, "path", { d: `M597 ${r.y + 0.5}H1240` });
      r.labels.forEach(l => label(l[1], r.y, l));
      r.ticks.forEach(t => add(dims, "path", { d: `M${t - 3} ${r.y + 5}l7 -11` }));
    });
    cols.forEach(c => {
      add(dims, "path", { d: `M${c.x + 0.5} 465V778` });
      c.labels.forEach(l => label(c.x - 1, l[1], l, true));
      c.ticks.forEach(t => add(dims, "path", { d: `M${c.x - 5} ${t - 4}l11 8` }));
    });

    // extension lines: [x, top] and [y, left]
    [[597, 340], [605, 367], [693, 367], [759, 421], [774, 367], [782, 367], [830, 394], [878, 367], [886, 367],
     [902, 421], [967, 367], [999, 367], [1003, 367], [1004, 367], [1048, 394], [1091, 367], [1095, 367], [1097, 367],
     [1145, 394], [1194, 367], [1196, 367], [1200, 367], [1240, 340]]
      .forEach(e => add(dims, "path", { d: `M${e[0] + 0.5} ${e[1]}V450` }));
    [[465, 445], [497, 472], [513, 499], [561, 553], [610, 499], [658, 553], [690, 526], [706, 499], [722, 553], [770, 553], [778, 445]]
      .forEach(e => add(dims, "path", { d: `M${e[1]} ${e[0] + 0.5}H582` }));
  </script>

</body>
</html>
```
FILE: styles.css
```css
* {
  box-sizing: border-box;
}
body {
  margin: 0;
  height: 100vh;
  display: flex;
  flex-direction: column;
  overflow: hidden;
  background: #efefef;
  color: #444;
  font-family: "Open Sans", "Noto Sans", sans-serif;
  font-size: 13px;
}
button {
  border: none;
  background: none;
  padding: 0;
  margin: 0;
  font: inherit;
  color: inherit;
}
a {
  color: inherit;
  text-decoration: none;
}
h1, h2 {
  margin: 0;
  font-weight: normal;
}
svg {
  display: block;
}
.defs {
  position: absolute;
}

/* title bar */
.titlebar {
  height: 40px;
  flex: none;
  display: flex;
  align-items: center;
  background: #f99820;
  position: relative;
}
.quick {
  display: flex;
  align-items: center;
  align-self: flex-start;
  height: 34px;
  padding-left: 2px;
}
.quick i {
  width: 1px;
  height: 26px;
  margin: 0 4px 0 3px;
  background: #f3d9b0;
}
.q {
  width: 31px;
  display: flex;
  justify-content: center;
}
.q:first-child {
  width: 24px;
}
.q.wide {
  width: 38px;
}
.dd {
  width: 14px;
  display: flex;
  justify-content: center;
  color: #5d4a32;
}
.dd.pale {
  color: #e8c48e;
}
.app-title {
  position: absolute;
  left: 0;
  right: 0;
  padding-left: 345px;
  text-align: center;
  color: #222;
  pointer-events: none;
}
.win {
  margin-left: auto;
  display: flex;
  gap: 42px;
  padding-right: 18px;
  color: #7a6b58;
}

/* menu */
.menu {
  height: 40px;
  flex: none;
  display: flex;
  align-items: center;
  padding: 0 5px 0 29px;
  gap: 38px;
}
.menu a {
  line-height: 32px;
  border-bottom: 3px solid transparent;
  padding-top: 1px;
  white-space: nowrap;
}
.menu a:first-child {
  margin-right: 10px;
}
.menu .on {
  font-weight: bold;
  border-color: #6b4423;
  margin: 0 -5px 0 -3px;
  padding: 1px 2px 0;
}
.mdi {
  margin-left: auto;
  display: flex;
  align-items: center;
  gap: 10px;
  color: #666;
}
.mdi button:nth-of-type(n+3) {
  margin-left: 3px;
}
.up {
  transform: rotate(180deg);
}

/* ribbon */
.ribbon {
  height: 121px;
  flex: none;
  margin: 0 4px 0 5px;
  display: flex;
  background: #fff;
  border: 1px solid #c8c8c8;
  border-radius: 8px;
  box-shadow: 0 2px 2px #c8c8c8;
  padding: 2px 0;
}
.group {
  display: flex;
  flex-direction: column;
  border-right: 1px solid #ccc;
  position: relative;
}
.group h2 {
  margin-top: auto;
  text-align: center;
  font-size: 13px;
  line-height: 18px;
  padding-bottom: 5px;
  color: #666;
}
.walls { width: 131px; }
.lines { width: 128px; }
.openings { width: 214px; }
.views { width: 408px; }
.display { width: 191px; }
.tools {
  display: flex;
  padding-top: 3px;
}
.openings .tools {
  padding-left: 6px;
}
.views .tools {
  padding-left: 5px;
}
.cont {
  width: 88px;
  height: 82px;
  display: flex;
  flex-direction: column;
  align-items: center;
  padding-left: 6px;
}
.lines .cont {
  width: 86px;
  padding-left: 2px;
}
.cont span {
  line-height: 18px;
  margin: 3px 0 6px;
}
.shapes {
  display: flex;
  flex-direction: column;
  gap: 8px;
  margin-top: 2px;
  height: 76px;
  padding-left: 10px;
  border-left: 1px solid #ccc;
}
.big {
  display: flex;
  flex-direction: column;
  align-items: center;
  line-height: 14px;
  min-width: 54px;
  white-space: nowrap;
}
.big svg {
  margin-bottom: 5px;
}
.big:disabled {
  color: #b4b4b4;
}
.openings .big:last-child { width: 94px; }
.w60 { width: 60px; }
.w66 { width: 66px; }
.w70 { width: 70px; }
.w80 { width: 79px; }
.combos {
  padding: 3px 6px 0 9px;
}
.row {
  display: flex;
  align-items: center;
  gap: 3px;
}
.row + .row {
  margin-top: 1px;
}
.pick {
  position: relative;
  flex: 1;
}
.pick select {
  width: 100%;
  height: 24px;
  appearance: none;
  border: 1px solid #c4c4c4;
  border-radius: 5px;
  background: #fdfdfd;
  font: inherit;
  color: #222;
  padding: 0 1px;
}
.pick::after, .search::after {
  content: "";
  position: absolute;
  right: 6px;
  top: 10px;
  border: 3px solid transparent;
  border-top: 4px solid #777;
}
.display h2 {
  padding-right: 20px;
}
.launch {
  position: absolute;
  right: 7px;
  bottom: 9px;
}

/* work area */
main {
  flex: 1;
  min-height: 0;
  display: flex;
  margin-top: 6px;
}
.head {
  height: 42px;
  flex: none;
  display: flex;
  align-items: center;
  gap: 12px;
  padding: 0 8px 0 5px;
  color: #666;
}
.head h1 {
  flex: 1;
  font-family: "Open Sans", "Noto Sans", sans-serif;
  font-size: 22px;
  font-weight: normal;
  line-height: 30px;
  color: #484848;
}
.head.brown h1 {
  color: #70491d;
}
.browser {
  width: 306px;
  flex: none;
  display: flex;
  flex-direction: column;
  padding: 0 7px 2px 1px;
  font-family: Inter, "Liberation Sans", sans-serif;
  font-weight: 300;
}
.search {
  height: 24px;
  flex: none;
  margin: 1px 0 6px;
  background: #fff;
  border: 2px solid #ccc;
  border-radius: 4px;
  position: relative;
}
.search::after {
  top: 9px;
  right: 10px;
}
.search input {
  width: 7px;
  height: 19px;
  border: none;
  padding: 0 0 0 3px;
  font: inherit;
  color: #333;
  background: none;
}
.cats {
  height: 171px;
  flex: none;
  border: 1px solid #c4c4c4;
  border-bottom-width: 2px;
  background: linear-gradient(#f9f9f9, #efefef);
  padding: 1px 2px;
}
.cats a {
  display: block;
  line-height: 24px;
  padding-left: 2px;
  color: #333;
}
.cats .sel {
  background: #e2e2e2;
  color: #000;
}
.items {
  flex: 1;
  border: 1px solid #c4c4c4;
  border-top: none;
  background: linear-gradient(#f9f9f9, #efefef);
  padding: 1px 5px;
}
.items table {
  border-collapse: collapse;
}
.items tr {
  height: 24px;
}
.items th, .items td {
  padding: 0;
}
.items th {
  width: 46px;
  text-align: left;
  font-weight: bold;
}
.items td::before {
  content: "›";
  display: inline-block;
  width: 8px;
  color: #8b0000;
  font-weight: bold;
  position: relative;
  top: 4px;
}
.items .gap td::before {
  content: "";
}
.filter {
  height: 29px;
  flex: none;
  border: 1px solid #c4c4c4;
  border-top-width: 2px;
  background: #fdfdfd;
}

/* plan */
.plan {
  flex: 1;
  min-width: 0;
  display: flex;
  border-top: 2px solid #777;
  padding-top: 4px;
}
.frame {
  flex: 1;
  min-width: 0;
  display: flex;
  flex-direction: column;
  border: solid #777;
  border-width: 2px 1px 0 2px;
}
.paper {
  flex: 1;
  min-height: 0;
  display: grid;
  grid-template: 1fr 19px / 1fr 20px;
  background: #fff;
  border: solid #fff;
  border-width: 5px 4px 4px 5px;
  overflow: hidden;
}
.drawing {
  min-height: 0;
  overflow: hidden;
  shape-rendering: crispEdges;
}
.vbar {
  background: #efefef;
  padding: 112px 0 0 8px;
}
.vbar b {
  display: block;
  width: 3px;
  height: 50px;
  background: #858585;
}
.hbar {
  grid-column: 1 / 3;
  background: #efefef;
  padding: 8px 0 0 128px;
}
.hbar b {
  display: block;
  width: 163px;
  height: 3px;
  border-radius: 2px;
  background: #858585;
}
#grid path {
  stroke: #bcdcbf;
}
#dims path {
  stroke: #000080;
  fill: none;
}
.drawing text {
  font-family: "Liberation Sans", Arial, sans-serif;
  text-anchor: middle;
  dominant-baseline: central;
  fill: #000080;
  paint-order: stroke;
}
.drawing .dim {
  font-size: 14px;
  stroke: #fff;
  stroke-width: 3px;
}
.drawing .frac {
  font-size: 7px;
}
.drawing .lbl {
  font-size: 10px;
  stroke: #fffaf0;
  stroke-width: 3px;
}
.u {
  text-decoration: underline;
}
.cab { fill: #fffaf0; }
.appl { fill: #e0e0ff; stroke: #000080; }
.k { fill: none; stroke: #000; }
.r { fill: none; stroke: #f00; }
.b { fill: none; stroke: #00f; }
.g { fill: none; stroke: #008000; }
.t { fill: none; stroke: #006a6a; }
.thick { stroke-width: 2px; }
.m { fill: none; stroke: #f0f; stroke-width: 3px; }
.dash { fill: none; stroke: #808080; stroke-dasharray: 3 3; }
.wall { fill: #c0c0c0; stroke: #808080; }
.edge { stroke: #808080; }
.win-frame { fill: #fff; stroke: #808080; }

.tabs {
  height: 23px;
  flex: none;
  display: flex;
  align-items: flex-start;
  border-top: 1px solid #a0a0a0;
}
.tabs .arrow {
  margin: 5px 0 0 4px;
}
.tabs .arrow.end {
  margin: 5px 12px 0 auto;
}
.tabs .slant {
  margin-left: 7px;
}
.tab {
  height: 21px;
  line-height: 18px;
  padding: 0 9px 2px 28px;
  background: #fafafa;
  border: solid #a0a0a0;
  border-width: 0 1px 1px 0;
  border-radius: 0 0 4px 4px;
}
.tab.on, .tab.plain {
  background: #fff;
  border-radius: 0 0 4px 0;
}
.tab.on {
  font-weight: bold;
  padding-left: 19px;
  padding-right: 8px;
}

/* right panels */
.side {
  width: 250px;
  flex: none;
  display: flex;
  flex-direction: column;
  padding-left: 9px;
}
.info {
  flex: 1;
  border: 1px solid #ccc;
  border-right-color: #e4e4e4;
  border-bottom-color: #e4e4e4;
  background: linear-gradient(#f9f9f9, #efefef);
  margin: 1px 2px 8px 0;
}
.side .head {
  padding-right: 9px;
}
.place {
  margin-right: 2px;
  border: 1px solid #a8a8a8;
  background: #f8f8f8;
  padding: 10px 4px 2px;
}
.card {
  border: 1px solid #ccc;
  border-radius: 4px;
}
.wheel {
  height: 220px;
  display: flex;
  justify-content: center;
  padding-top: 8px;
}
.opts {
  margin-top: 8px;
  height: 82px;
  padding: 7px 11px 4px 5px;
}
.offset {
  display: flex;
  gap: 2px;
}
.offset label {
  width: 68px;
  line-height: 28px;
}
.offset input {
  flex: 1;
  min-width: 0;
  height: 28px;
  border: 1px solid #ccc;
  border-radius: 4px;
  background: #fdfdfd;
  padding: 0 2px 6px;
  font: inherit;
  color: #444;
}
.spin {
  width: 14px;
  display: flex;
  flex-direction: column;
}
.spin button {
  height: 14px;
  border: 1px solid #ccc;
  background: #fdfdfd;
  display: flex;
  align-items: center;
  justify-content: center;
}
.modes {
  display: flex;
  gap: 5px;
  margin: 5px 0 0 47px;
}
.modes button {
  width: 36px;
  height: 36px;
  display: flex;
  align-items: center;
  justify-content: center;
  border: 1px solid #ccc;
  border-radius: 6px;
  background: #fbfbfb;
}
.modes .on {
  border-color: #6b4423;
  background: #e3e3e3;
}
.side .tabs {
  border-top: none;
  height: 20px;
  margin-right: 2px;
}
.side .slant {
  margin-left: 3px;
}
.side .tab {
  height: 19px;
  line-height: 16px;
  padding: 0 7px 2px 15px;
}
.side .tab:last-of-type {
  padding-left: 24px;
}
.rail {
  width: 32px;
  flex: none;
  display: flex;
  flex-direction: column;
  align-items: flex-start;
  height: 114px;
  margin-top: 2px;
  padding-left: 4px;
  border-right: 4px solid #ccc;
}
.rail span {
  writing-mode: vertical-rl;
  font-size: 14px;
  line-height: 18px;
  white-space: nowrap;
}

/* status bar */
footer {
  height: 26px;
  flex: none;
  display: flex;
  gap: 1px;
  padding: 2px 0 0 calc(100% - 273px);
  border-top: 1px solid #ccc;
  background: #f8f8f8;
}
footer button {
  width: 30px;
  display: flex;
  justify-content: center;
  padding-top: 2px;
}
footer .on {
  background: #cfcfcf;
  border: 1px solid #f99820;
  border-bottom: none;
}
footer .flag {
  width: 28px;
  margin-left: auto;
  background: #cfcfcf;
}
```
